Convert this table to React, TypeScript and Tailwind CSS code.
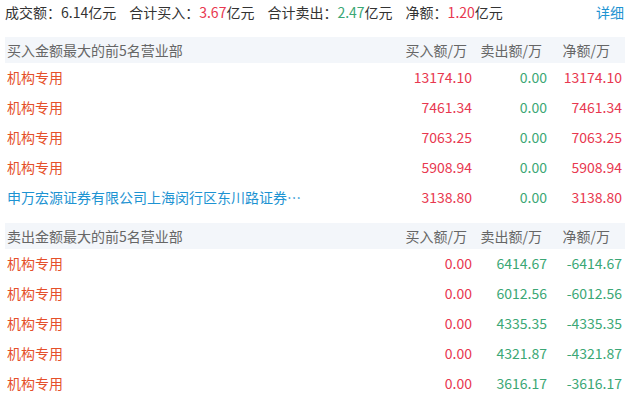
import React from "react";

type Row = { name: string; buy: string; sell: string; net: string; link?: boolean };

const buyRows: Row[] = [
  { name: "机构专用", buy: "13174.10", sell: "0.00", net: "13174.10" },
  { name: "机构专用", buy: "7461.34", sell: "0.00", net: "7461.34" },
  { name: "机构专用", buy: "7063.25", sell: "0.00", net: "7063.25" },
  { name: "机构专用", buy: "5908.94", sell: "0.00", net: "5908.94" },
  {
    name: "申万宏源证券有限公司上海闵行区东川路证券营业部",
    buy: "3138.80",
    sell: "0.00",
    net: "3138.80",
    link: true,
  },
];

const sellRows: Row[] = [
  { name: "机构专用", buy: "0.00", sell: "6414.67", net: "-6414.67" },
  { name: "机构专用", buy: "0.00", sell: "6012.56", net: "-6012.56" },
  { name: "机构专用", buy: "0.00", sell: "4335.35", net: "-4335.35" },
  { name: "机构专用", buy: "0.00", sell: "4321.87", net: "-4321.87" },
  { name: "机构专用", buy: "0.00", sell: "3616.17", net: "-3616.17" },
];

function Header({ title }: { title: string }) {
  return (
    <div className="flex h-[26px] items-center bg-[#f3f6fa] pl-[2px] pr-[3px] pb-[1px] text-[#666]">
      <div className="flex-1">{title}</div>
      <div className="w-[75px] pr-[5px] text-right">买入额/万</div>
      <div className="w-[75px] pr-[5px] text-right">卖出额/万</div>
      <div className="w-[75px] pr-[12px] text-right">净额/万</div>
    </div>
  );
}

function Table({ rows }: { rows: Row[] }) {
  return (
    <div>
      {rows.map((r, i) => {
        const netNeg = r.net.startsWith("-");
        return (
          <div key={i} className="flex h-[30px] items-center pl-[2px] pr-[3px] pb-[2px]">
            <div className="flex-1 min-w-0">
              <div
                className={
                  "max-w-[296px] truncate " +
                  (r.link ? "text-[#1d93d2]" : "text-[#e5502a]")
                }
              >
                {r.name}
              </div>
            </div>
            <div className="w-[75px] text-right text-[#e8384f]">{r.buy}</div>
            <div className="w-[75px] text-right text-[#3ba775]">{r.sell}</div>
            <div
              className={
                "w-[75px] text-right " +
                (netNeg ? "text-[#3ba775]" : "text-[#e8384f]")
              }
            >
              {r.net}
            </div>
          </div>
        );
      })}
    </div>
  );
}

export default function App() {
  return (
    <div
      className="w-[633px] h-[397px] overflow-hidden bg-white pl-[5px] pr-[8px] text-[14px] leading-[18px] text-[#333]"
      style={{ fontFamily: '"Noto Sans CJK SC", "Noto Sans", sans-serif' }}
    >
      <div className="flex h-[25px] items-center pr-[1px] pb-[1px]">
        <div className="flex flex-1 gap-[13px]">
          <span>
            成交额：<span>6.14</span>亿元
          </span>
          <span>
            合计买入：<span className="text-[#e8384f]">3.67</span>亿元
          </span>
          <span>
            合计卖出：<span className="text-[#3ba775]">2.47</span>亿元
          </span>
          <span>
            净额：<span className="text-[#e8384f]">1.20</span>亿元
          </span>
        </div>
        <span className="text-[#1d93d2]">详细</span>
      </div>
      <div className="mt-[12px]">
        <Header title="买入金额最大的前5名营业部" />
        <Table rows={buyRows} />
      </div>
      <div className="mt-[10px]">
        <Header title="卖出金额最大的前5名营业部" />
        <Table rows={sellRows} />
      </div>
    </div>
  );
}
